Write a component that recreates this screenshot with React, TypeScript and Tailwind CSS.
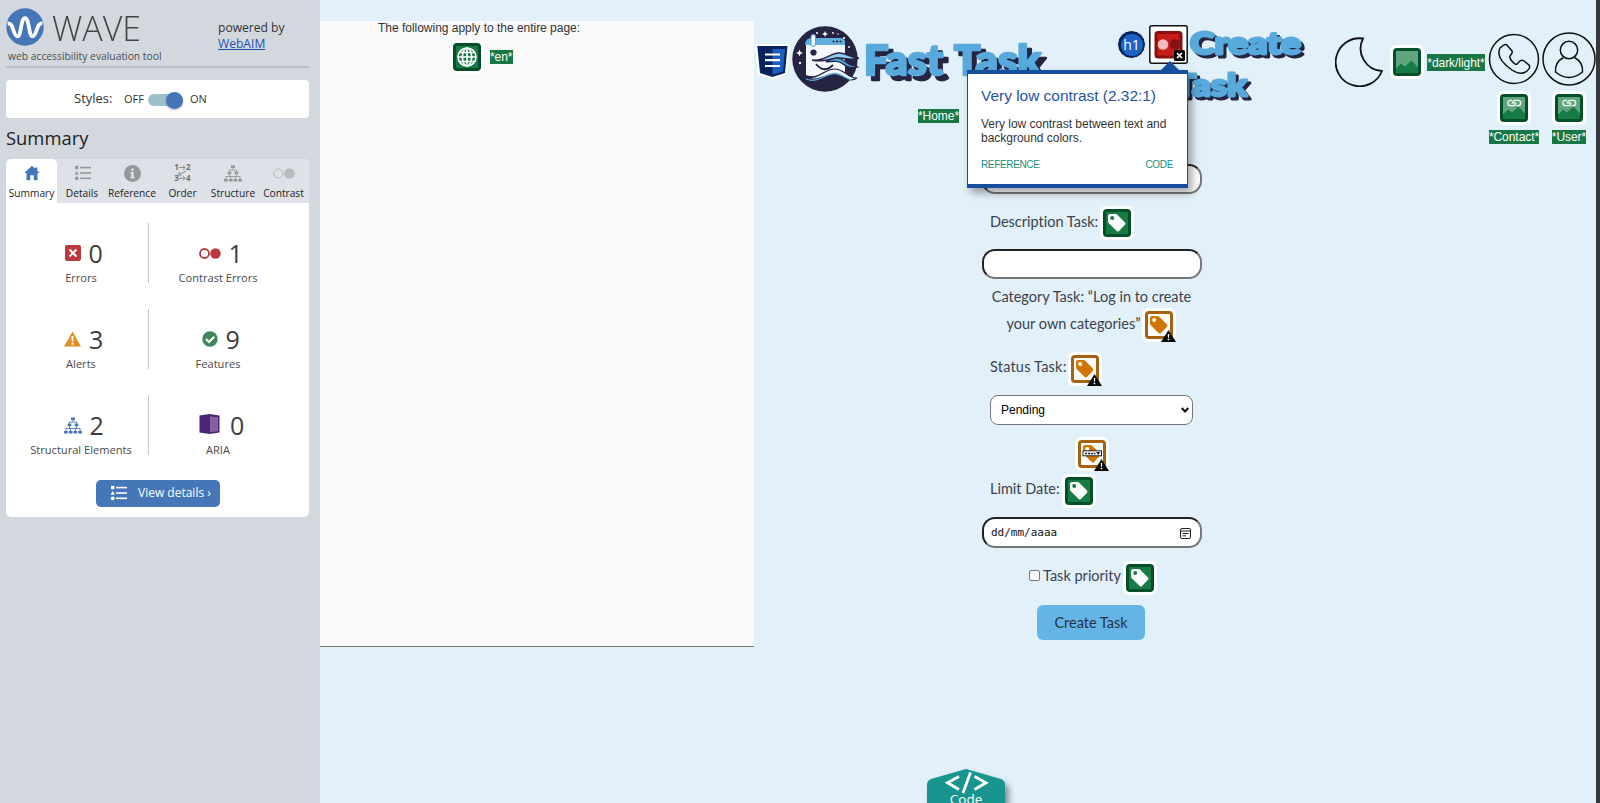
import type { ReactNode } from 'react';

const SANS = "font-['Open_Sans',sans-serif]";
const ARIAL = "font-['Liberation_Sans',Arial,sans-serif]";
const FORM = "font-['Lato','Open_Sans',sans-serif]";

function WaveLogo() {
  return (
    <svg className="block h-[38px] w-[38px] shrink-0" viewBox="0 0 38 38">
      <circle cx="19" cy="19" r="18.7" fill="#4577b8" />
      <path d="M1.6 15.5C5 15 6 18 7.500 22.500C8.800 26.500 9.800 28.300 11.500 28.300C15.500 28.300 14.500 10.200 19 10.200C23.500 10.200 22.500 28.300 26.500 28.300C28.200 28.300 29.200 26.500 30.500 22.500C32 18 33 15 36.400 15.500" fill="none" stroke="#fff" strokeWidth="3.800" />
    </svg>
  );
}

function HomeIcon() {
  return (
    <svg className="-mt-px block h-4 w-4" viewBox="0 0 16 16" fill="#4577b8">
      <path d="M8 0.800L0.300 8H2.500V15.200H6.300V10.200H9.700V15.200H13.500V8H15.700L13.300 5.700V2.500H11V3.600Z" />
    </svg>
  );
}

function ListIcon({ color }: { color: string }) {
  return (
    <svg className="-mt-px block h-4 w-[17px]" viewBox="0 0 17 16" fill={color}>
      <rect x="1" y="0.800" width="3.400" height="3.400" />
      <path d="M2.700 6L4.800 9.800H0.600Z" />
      <circle cx="2.700" cy="13.300" r="1.900" />
      <rect x="6" y="1.800" width="11" height="1.600" />
      <rect x="6" y="7.200" width="11" height="1.600" />
      <rect x="6" y="12.500" width="11" height="1.600" />
    </svg>
  );
}

function InfoIcon() {
  return (
    <svg className="mt-px block h-[17px] w-[17px]" viewBox="0 0 17 17">
      <circle cx="8.500" cy="8.500" r="8.500" fill="#96979a" />
      <path d="M7.200 3.500H9.700V5.700H7.200ZM6.300 7H9.700V12H10.700V13.300H6.300V12H7.300V8.300H6.300Z" fill="#dfe2e8" />
    </svg>
  );
}

function OrderIcon() {
  return (
    <svg className="block h-[18px] w-[18px] overflow-visible" viewBox="0 0 18 18" fill="none" stroke="#8c8d91" strokeWidth="1">
      <g fill="#6d6e72" stroke="none" fontFamily="Open Sans" fontWeight="700" fontSize="8">
        <text x="0.300" y="6">1</text>
        <text x="12" y="6">2</text>
        <text x="0.300" y="17">3</text>
        <text x="12" y="17">4</text>
      </g>
      <path d="M5 3.500H11M9 1.500L11.200 3.500L9 5.500M5 14.300H11M9 12.300L11.200 14.300L9 16.300M12 7L5 10.800M5.300 8L4.500 11H7.500" />
    </svg>
  );
}

function TreeIcon({ color }: { color: string }) {
  return (
    <svg className="block h-[17px] w-[18px]" viewBox="0 0 18 17" fill={color}>
      <path d="M7 0.500H11V3H7ZM3.700 6.500H7.300V9.200H3.700ZM10.700 6.500H14.300V9.200H10.700ZM0 14H3.800V16.500H0ZM4.800 14H8.500V16.500H4.800ZM9.500 14H13.200V16.500H9.500ZM14.200 14H18V16.500H14.200Z" />
      <path d="M9 3V5M5.500 6.500V5H12.500V6.500M5.500 9.200V11.500M12.500 9.200V11.500M1.900 14V11.500H16.100V14M6.600 14V11.500M11.400 14V11.500" fill="none" stroke={color} strokeWidth="0.900" />
    </svg>
  );
}

function ContrastIcon({ color, bold }: { color: string; bold?: boolean }) {
  return (
    <svg className="block h-[11px] w-[22px]" viewBox="0 0 22 11">
      <circle cx="5.500" cy="5.500" r="4.500" fill="none" stroke={color} strokeWidth={bold ? 1.8 : 1.1} />
      <circle cx="16.500" cy="5.500" r="5.200" fill={color} />
    </svg>
  );
}

function Tab({ icon, label, active }: { icon: ReactNode; label: string; active?: boolean }) {
  return (
    <div className={`flex flex-col items-center ${active ? 'rounded-t-[5px] bg-white' : ''}`}>
      <div className="flex h-[28px] items-center justify-center">{icon}</div>
      <div className="whitespace-nowrap text-[10.200px] leading-[13px] text-[#1c1c1c]">{label}</div>
    </div>
  );
}

function Stat({ icon, value, label, divider }: { icon: ReactNode; value: string; label: string; divider?: boolean }) {
  return (
    <div className={`flex h-[60px] flex-col items-center pt-[13px] ${divider ? 'border-r border-[#c4c6c9]' : ''}`}>
      <div className="flex h-[34px] items-center gap-2 pl-[5px]">
        {icon}
        <span className="text-[25px] leading-[34px] tracking-[-0.500px] text-[#3d3d3d]">{value}</span>
      </div>
      <div className="whitespace-nowrap text-[11.100px] leading-[16px] text-[#4a4a4a]">{label}</div>
    </div>
  );
}

function Sidebar() {
  return (
    <aside className={`flex h-full w-[320px] shrink-0 flex-col bg-[#d3d8df] pl-[6px] pr-[11px] pt-2 ${SANS}`}>
      <div className="flex h-[60px] justify-between border-b-2 border-[#bbbfc6]">
        <div className="w-[170px]">
          <div className="flex h-[38px] items-center">
            <WaveLogo />
            <span className="ml-2 mt-[2px] origin-left scale-x-[0.970] text-[35px] font-light leading-[38px] text-[#444]">WAVE</span>
          </div>
          <div className="ml-[2px] whitespace-nowrap text-[10.300px] leading-[20px] text-[#4b4d50]">web accessibility evaluation tool</div>
        </div>
        <div className="w-[91px] pt-3 text-[12.100px] leading-[16px] text-[#333]">
          <div>powered by</div>
          <a className="text-[#2350ad] underline">WebAIM</a>
        </div>
      </div>
      <div className="mt-3 flex h-[38px] shrink-0 items-center rounded-[4px] bg-white pl-[68px] text-[#333]">
        <span className="w-[50px] text-[13px]">Styles:</span>
        <span className="w-6 text-[11px]">OFF</span>
        <div className="relative mt-[2px] h-3 w-[35px] rounded-full bg-[#9dc0cb]">
          <div className="absolute -top-[2px] right-0 h-[17px] w-[17px] rounded-full bg-[#4577b8] shadow-[0_1px_2px_rgba(0,0,0,0.300)]" />
        </div>
        <span className="ml-[7px] text-[11px]">ON</span>
      </div>
      <h1 className="mt-[6px] h-[35px] text-[18.400px] leading-[27px] text-[#1d1d1d]">Summary</h1>
      <div className="h-[358px] shrink-0 overflow-hidden rounded-[5px] bg-white">
        <div className="grid h-[44px] grid-cols-[51px_50px_50px_51px_50px_51px] bg-[#dee2e8]">
          <Tab active icon={<HomeIcon />} label="Summary" />
          <Tab icon={<ListIcon color="#96979a" />} label="Details" />
          <Tab icon={<InfoIcon />} label="Reference" />
          <Tab icon={<OrderIcon />} label="Order" />
          <Tab icon={<TreeIcon color="#96979a" />} label="Structure" />
          <Tab icon={<ContrastIcon color="#b8babd" />} label="Contrast" />
        </div>
        <div className="ml-[8px] mt-5 grid w-[273px] grid-cols-[135px_138px] gap-y-[26px]">
          <Stat divider value="0" label="Errors" icon={
            <svg className="h-4 w-4" viewBox="0 0 16 16"><rect width="16" height="16" rx="2" fill="#bb383e" /><path d="M4.500 4.500L11.500 11.500M11.500 4.500L4.500 11.500" stroke="#fff" strokeWidth="2" /></svg>
          } />
          <Stat value="1" label="Contrast Errors" icon={<ContrastIcon color="#bb383e" bold />} />
          <Stat divider value="3" label="Alerts" icon={
            <svg className="h-4 w-[17px]" viewBox="0 0 17 16"><path d="M8.500 0.500L17 15.500H0Z" fill="#e08f24" /><path d="M7.400 5H9.600L9.200 10.500H7.800ZM7.500 11.700H9.500V13.700H7.500Z" fill="#fff" /></svg>
          } />
          <Stat value="9" label="Features" icon={
            <svg className="h-4 w-4" viewBox="0 0 16 16"><circle cx="8" cy="8" r="7.700" fill="#41855e" /><path d="M4 8L7 11L12.200 5.700" fill="none" stroke="#fff" strokeWidth="2" /></svg>
          } />
          <Stat divider value="2" label="Structural Elements" icon={<TreeIcon color="#4577b8" />} />
          <Stat value="0" label="ARIA" icon={
            <svg className="-mt-[3px] ml-[2px] mr-[2px] h-5 w-[21px]" viewBox="0 0 21 20"><path d="M0.500 1.500L10.500 0L20.500 1.500V18.500L10.500 20L0.500 18.500Z" fill="#4b2671" /><path d="M11 2.500L19 3.200V17L11 18.500Z" fill="#8660a5" /></svg>
          } />
        </div>
        <div className="mt-[25px] flex justify-start pl-[90px]">
          <button className="flex h-[27px] w-[124px] items-center rounded-[5px] bg-[#4577b8] pl-[14px] text-[12px] text-white">
            <ListIcon color="#fff" />
            <span className="-mt-px ml-[11px] whitespace-nowrap">View details ›</span>
          </button>
        </div>
      </div>
    </aside>
  );
}

type Glyph = 'globe' | 'tag' | 'image' | 'imageLink';

function FeatureIcon({ glyph }: { glyph: Glyph }) {
  return (
    <svg className="block h-[34px] w-[34px] shrink-0" viewBox="0 0 34 34">
      <rect width="34" height="34" rx="6" fill="#fff" fillOpacity="0.900" />
      <rect x="3" y="3" width="28" height="28" rx="4" fill="#034f27" />
      <rect x="6" y="6" width="22" height="22" fill="#177b46" />
      {glyph === 'globe' && (
        <g fill="none" stroke="#fff" strokeWidth="1.700">
          <circle cx="17" cy="17" r="9" /><ellipse cx="17" cy="17" rx="4.600" ry="9" />
          <path d="M8 17H26M17 8V26M9.500 12.500H24.500M9.500 21.500H24.500" />
        </g>
      )}
      {glyph === 'tag' && (
        <path fillRule="evenodd" d="M8 10Q8 8 10 8H15.500Q16.500 8 17.500 9L25 16.500Q26 17.500 25 18.700L19 25Q17.800 26 16.700 25L9 17.500Q8 16.500 8 15.500ZM12.200 10A2 2 0 1 0 12.200 14A2 2 0 1 0 12.200 10Z" fill="#fff" />
      )}
      {(glyph === 'image' || glyph === 'imageLink') && (
        <>
          <rect x="6" y="6" width="22" height="22" fill="#5fa57f" />
          <path d="M6 23.500L11 18.500L15 21.500L21.500 15.500L28 22.500V28H6Z" fill="#177b46" />
        </>
      )}
      {glyph === 'imageLink' && (
        <path d="M15 9.300H13.500A2.700 2.700 0 0 0 13.500 14.700H16.500Q18.500 14.700 18.500 12.500V11.800H14.500M19.500 14.700H21A2.700 2.700 0 0 0 21 9.300H18Q15.800 9.300 15.800 11.500" fill="none" stroke="#eef8f2" strokeWidth="1.300" />
      )}
    </svg>
  );
}

function AlertLabelIcon({ select }: { select?: boolean }) {
  return (
    <svg className="block h-[34px] w-[34px] shrink-0" viewBox="0 0 34 34">
      <rect width="34" height="34" rx="6" fill="#fff" />
      <rect x="4.500" y="4.500" width="25" height="25" rx="2.500" fill="#fff" stroke="#a8610f" strokeWidth="3" />
      <path fillRule="evenodd" d="M8 10Q8 8 10 8H15.500Q16.500 8 17.500 9L25 16.500Q26 17.500 25 18.700L19 25Q17.800 26 16.700 25L9 17.500Q8 16.500 8 15.500ZM12.200 10A2 2 0 1 0 12.200 14A2 2 0 1 0 12.200 10Z" fill="#d17507" />
      {select && (
        <g><rect x="8" y="13.800" width="18.500" height="5" fill="#fff" stroke="#222" strokeWidth="1" /><path d="M10 16.500H20.500" stroke="#222" strokeWidth="1.400" strokeDasharray="2.200 0.800" /><path d="M21 15H25.300L23.200 18Z" fill="#222" /></g>
      )}
      <path d="M26.500 22L34 34H19Z" fill="#080808" />
      <path d="M25.700 26H27.300L27 29.800H26ZM25.700 30.800H27.300V32.200H25.700Z" fill="#fff" />
    </svg>
  );
}

function AltText({ children }: { children: string }) {
  return <span className={`flex h-[14px] items-center justify-center whitespace-nowrap bg-[#187745] text-[12px] leading-[14px] tracking-[-0.050px] text-white ${ARIAL}`}>{children}</span>;
}

function MascotLogo() {
  return (
    <svg className="block h-[68px] w-[68px] shrink-0" viewBox="0 0 68 68">
      <circle cx="33" cy="34" r="32.700" fill="#252443" />
      <g fill="#fff">
        <path d="M33 6L33.900 8.100L36 9L33.900 9.900L33 12L32.100 9.900L30 9L32.100 8.100ZM7.500 24.500L8.500 27L11 28L8.500 29L7.500 31.500L6.500 29L4 28L6.500 27Z" />
        <circle cx="25" cy="8" r="1" /><circle cx="41" cy="8" r="0.900" /><circle cx="52" cy="13" r="1.100" /><circle cx="8" cy="38" r="1.200" /><circle cx="57" cy="22" r="0.900" /><circle cx="58" cy="53" r="0.900" /><circle cx="46" cy="9" r="0.700" />
      </g>
      <path d="M14 20Q14 14 20 14H48Q53 14 53 18V47Q35 45 30 49Q22 53 14 50Z" fill="#f4f8fc" />
      <path d="M13 20Q13 13 20 13H48Q53 13 53 18V20H13Z" fill="#5fafdf" />
      <rect x="19" y="9.500" width="4.500" height="12" rx="2.200" fill="#f4f8fc" stroke="#4aa0d8" />
      <g fill="#252443"><circle cx="41.500" cy="16.500" r="1.100" /><circle cx="45" cy="16.500" r="1.100" /><circle cx="48.500" cy="16.500" r="1.100" /><circle cx="21.500" cy="27.500" r="3.100" /></g>
      <path d="M20 35C32 37 38 28 47 28C55 28 58 33 67 33C58 36 55 33 47 33C40 33 32 38 20 35Z" fill="#8fcbea" stroke="#252443" strokeWidth="1.500" />
      <path d="M34 37C44 31 49 33 54 37C58 41 62 40 66 42C59 44 55 42 51 39C47 36 43 36 34 37Z" fill="#4da3da" stroke="#252443" strokeWidth="1.200" />
      <path d="M24 39Q32 49 41 40" fill="none" stroke="#252443" strokeWidth="1.800" />
      <path d="M11 50C24 58 31 44 43 44C52 44 57 54 65 53C56 59 52 49 43 49C32 49 24 60 11 50Z" fill="#f4f8fc" stroke="#252443" strokeWidth="1.200" />
      <path d="M14 54C27 59 33 48 43 48.500C50 49 54 54 60 55" fill="none" stroke="#5fafdf" strokeWidth="1.300" />
    </svg>
  );
}

const LETTERING = {
  fontFamily: 'Lato',
  fontWeight: 900,
  fill: '#58a9dc',
  stroke: '#58a9dc',
  strokeLinejoin: 'round' as const,
  lengthAdjust: 'spacingAndGlyphs' as const,
};

function BrandText() {
  return (
    <svg className="block h-[50px] w-[190px] shrink-0 overflow-visible drop-shadow-[5px_5px_0_#252443]" viewBox="0 0 190 50">
      <text x="1" y="35" fontSize="41" strokeWidth="2.500" textLength="79" {...LETTERING}>Fast</text>
      <text x="91" y="35" fontSize="41" strokeWidth="2.500" textLength="87" {...LETTERING}>Task</text>
    </svg>
  );
}

function HeadingWord({ word, width }: { word: string; width: number }) {
  return (
    <svg className="block h-[42px] shrink-0 overflow-visible drop-shadow-[3px_3px_0_#252443]" width={width} height="42">
      <text x="2" y="31" fontSize="31" strokeWidth="2.800" textLength={width - 5} {...LETTERING}>{word}</text>
    </svg>
  );
}

function Popover() {
  return (
    <div className={`absolute left-[213px] top-[70px] z-10 h-[118px] w-[221px] border-x border-b-[4px] border-t-[4px] border-[#164f9f] bg-white px-[13px] text-[#333] shadow-[4px_5px_8px_rgba(0,0,0,0.350)] ${ARIAL}`}>
      <svg className="absolute -top-[13px] left-[192px] h-[10px] w-[20px]" viewBox="0 0 20 10"><path d="M10 0L20 10H0Z" fill="#164f9f" /></svg>
      <h2 className="mt-[13px] whitespace-nowrap text-[15.500px] leading-[18px] tracking-[-0.030px] text-[#2455a4]">Very low contrast (2.32:1)</h2>
      <p className="mt-[12px] whitespace-nowrap text-[12px] leading-[14px] tracking-[-0.020px]">Very low contrast between text and<br />background colors.</p>
      <div className="mt-[13px] flex justify-between text-[10px] leading-[14px] tracking-[-0.350px] text-[#16907e]">
        <span>REFERENCE</span>
        <span className="pr-px">CODE</span>
      </div>
    </div>
  );
}

function Header() {
  return (
    <header className="relative flex h-[164px] shrink-0">
      <div className="flex w-[300px] flex-col pt-[25px]">
        <div className="flex">
          <svg className="ml-px mt-[19px] block h-[35px] w-[35px] shrink-0" viewBox="0 0 35 35">
            <path d="M0 0H35L32.500 30.500L17.500 35L2.500 30.500Z" fill="#fff" />
            <path d="M2.300 2H32.500L30 29L17.500 33L5 29Z" fill="#06245b" />
            <path d="M17.500 5H30L28 27.500L17.500 30.500Z" fill="#1c5fc0" />
            <path d="M10 10.500H25M10 16.200H25M10 22H25" stroke="#fff" strokeWidth="2.200" />
          </svg>
          <div className="ml-[2px]"><MascotLogo /></div>
          <div className="ml-[3px] mt-[15px]"><BrandText /></div>
        </div>
        <div className="ml-[164px] mt-[16px] flex w-[42px]"><AltText>*Home*</AltText></div>
      </div>
      <div className="flex w-[280px] flex-col items-center pl-[33px] pt-[23px]">
        <div className="flex items-start">
          <div className={`mr-[3px] mt-[7px] flex h-[29px] w-[29px] items-center justify-center rounded-full border-[1.500px] border-white bg-[#06245b] ${SANS}`}>
            <span className="flex h-[22px] w-[22px] items-center justify-center rounded-full bg-[#1d63c7] text-[14px] leading-none text-white">h1</span>
          </div>
          <svg className="mt-[2px] block h-[39px] w-[39px] shrink-0" viewBox="0 0 39 39">
            <rect x="0.800" y="0.800" width="37.400" height="37.400" rx="2" fill="#fff" stroke="#111" strokeWidth="1.500" />
            <rect x="7" y="7.500" width="25" height="24.500" rx="2" fill="#c71c1c" stroke="#8d0e0e" strokeWidth="3" />
            <circle cx="14" cy="19.500" r="5.300" fill="#f8b9ba" /><circle cx="26" cy="19.500" r="5.300" fill="#851315" />
            <rect x="25" y="25" width="11" height="11" rx="1.500" fill="#050505" />
            <path d="M28 28L33 33M33 28L28 33" stroke="#fff" strokeWidth="1.700" />
          </svg>
          <HeadingWord word="Create" width={116} />
        </div>
        <HeadingWord word="Task" width={78} />
      </div>
      <div className="flex flex-1 items-start">
        <svg className="ml-px mt-[37px] block h-[50px] w-[48px] shrink-0" viewBox="0 0 48 50" fill="none" stroke="#111" strokeWidth="1.800">
          <path d="M28 1.500A24 24 0 1 0 47 34A22.500 22.500 0 0 1 28 1.500Z" />
        </svg>
        <div className="ml-[7px] mt-[45px]"><FeatureIcon glyph="image" /></div>
        <div className="ml-[3px] mt-[54px] flex w-[58px] justify-center bg-[#187745] py-[1.500px]"><AltText>*dark/light*</AltText></div>
        <div className="ml-[3px] mt-[32px] flex w-[52px] flex-col items-center">
          <svg className="block h-[54px] w-[54px]" viewBox="0 0 54 54" fill="none" stroke="#111" strokeWidth="1.500">
            <circle cx="27" cy="27" r="24.500" />
            <path d="M13 16Q18 11 20 13L25 19Q26 21 23 24Q22 27 28 32Q30 33 31 31Q34 27 37 29L42 33Q44 36 40 39Q34 44 25 38Q8 26 13 16Z" />
          </svg>
          <div className="mt-[5px]"><FeatureIcon glyph="imageLink" /></div>
          <div className="mt-[5px] flex"><AltText>*Contact*</AltText></div>
        </div>
        <div className="ml-[2px] mt-[32px] flex w-[54px] flex-col items-center">
          <svg className="block h-[54px] w-[54px]" viewBox="0 0 54 54" fill="none" stroke="#111" strokeWidth="1.500">
            <circle cx="27" cy="27" r="26" />
            <circle cx="27" cy="18" r="8.700" />
            <path d="M21.500 25.500C15 29 13 34 13.500 40Q27 51 40.500 40C41 34 39 29 32.500 25.500" />
          </svg>
          <div className="mt-[5px]"><FeatureIcon glyph="imageLink" /></div>
          <div className="mt-[5px] flex"><AltText>*User*</AltText></div>
        </div>
      </div>
      <Popover />
    </header>
  );
}

const FIELD = 'w-[220px] shrink-0 rounded-[13px] border-2 border-b-[#777] border-l-[#222] border-r-[#777] border-t-[#222] bg-white';

function TaskForm() {
  return (
    <form className={`ml-[228px] flex w-[219px] flex-col text-[14.500px] text-[#3a424c] [font-variant-ligatures:none] ${FORM}`}>
      <div className={`h-[30px] ${FIELD}`} />
      <div className="flex h-[55px] items-center pl-[8px]">
        <span className="whitespace-nowrap">Description Task:</span>
        <div className="ml-[2px] mt-[3px]"><FeatureIcon glyph="tag" /></div>
      </div>
      <div className={`h-[30px] ${FIELD}`} />
      <div className="mt-[5px] text-center leading-[26px]">
        <div className="whitespace-nowrap">Category Task: “Log in to create</div>
        <div className="flex h-[27px] items-center justify-center">
          <span className="whitespace-nowrap">your own categories”</span>
          <div className="ml-[2px] mt-[2px]"><AlertLabelIcon /></div>
        </div>
      </div>
      <div className="flex h-[58px] items-center pl-[8px]">
        <span className="mt-px whitespace-nowrap tracking-[0.200px]">Status Task:</span>
        <div className="ml-[2px] mt-[5px]"><AlertLabelIcon /></div>
      </div>
      <div className={`ml-[8px] flex h-[30px] w-[203px] items-center justify-between rounded-[8px] border border-[#777] bg-white pl-[10px] pr-[3px] text-[12px] text-black ${ARIAL}`}>
        <span>Pending</span>
        <svg className="h-[6px] w-[8px]" viewBox="0 0 8 6" fill="none" stroke="#111" strokeWidth="2"><path d="M0.700 1L4 4.500L7.300 1" /></svg>
      </div>
      <div className="flex h-[48px] justify-center pt-[12px]"><AlertLabelIcon select /></div>
      <div className="flex h-[44px] items-start pl-[8px] pt-px">
        <span className="mt-[5px] whitespace-nowrap leading-[20px]">Limit Date:</span>
        <div className="ml-[2px]"><FeatureIcon glyph="tag" /></div>
      </div>
      <div className={`flex h-[31px] items-center justify-between pl-[7px] pr-[9px] font-['DejaVu_Sans_Mono',monospace] text-[11px] text-[#111] ${FIELD}`}>
        <span className="mt-[2px]">dd/mm/aaaa</span>
        <svg className="mt-px h-[11px] w-[11px]" viewBox="0 0 11 11" fill="none" stroke="#222" strokeWidth="1"><rect x="0.500" y="0.500" width="10" height="10" rx="1.500" /><path d="M0.500 3H10.500M2.500 5.500H8.500M2.500 7.800H6" /></svg>
      </div>
      <div className="flex h-[57px] items-center pl-[47px]">
        <span className="-mt-[2px] h-[11px] w-[11px] shrink-0 rounded-[2px] border border-[#777] bg-white" />
        <span className="-mt-px ml-[3px] whitespace-nowrap">Task priority</span>
        <div className="ml-[2px] mt-[3px]"><FeatureIcon glyph="tag" /></div>
      </div>
      <button type="button" className="ml-[55px] h-[35px] w-[108px] whitespace-nowrap rounded-[6px] bg-[#64b5e6] text-[#26323e]">Create Task</button>
    </form>
  );
}

export default function App() {
  return (
    <div className="flex h-[803px] w-[1600px] overflow-hidden bg-[#e2f0fa]">
      <Sidebar />
      <main className="relative flex w-[1276px] shrink-0">
        <section className={`mt-[21px] h-[626px] w-[434px] shrink-0 border-b border-[#777] bg-[#f9f9f9] text-[12px] text-[#333] ${ARIAL}`}>
          <p className="pl-[58px] leading-[15px] tracking-[-0.020px]">The following apply to the entire page:</p>
          <div className="flex items-center pl-[130px] pt-[4px]">
            <FeatureIcon glyph="globe" />
            <div className="ml-[6px]"><AltText>*en*</AltText></div>
          </div>
        </section>
        <div className="flex w-[842px] shrink-0 flex-col">
          <Header />
          <TaskForm />
        </div>
        <div className={`absolute left-[607px] top-[769px] h-[78px] w-[90px] text-white ${SANS}`}>
          <svg className="absolute left-0 top-0 h-[60px] w-[90px] overflow-visible" viewBox="0 0 90 60">
            <path d="M39 0L74 10Q78 11.500 78 16V60H0V16Q0 11.500 4 10Z" fill="#18958e" className="drop-shadow-[4px_5px_3px_rgba(0,0,0,0.400)]" />
            <path d="M32 7.500L20.500 13.800L32 20.500M47.500 7.500L59 13.800L47.500 20.500M43.500 3.500L36 24" fill="none" stroke="#fff" strokeWidth="2.800" />
          </svg>
          <span className="absolute left-0 top-[21px] w-[78px] text-center text-[13.500px] leading-[18px]">Code</span>
        </div>
      </main>
      <div className="w-1 shrink-0 bg-[#34383c]" />
    </div>
  );
}
